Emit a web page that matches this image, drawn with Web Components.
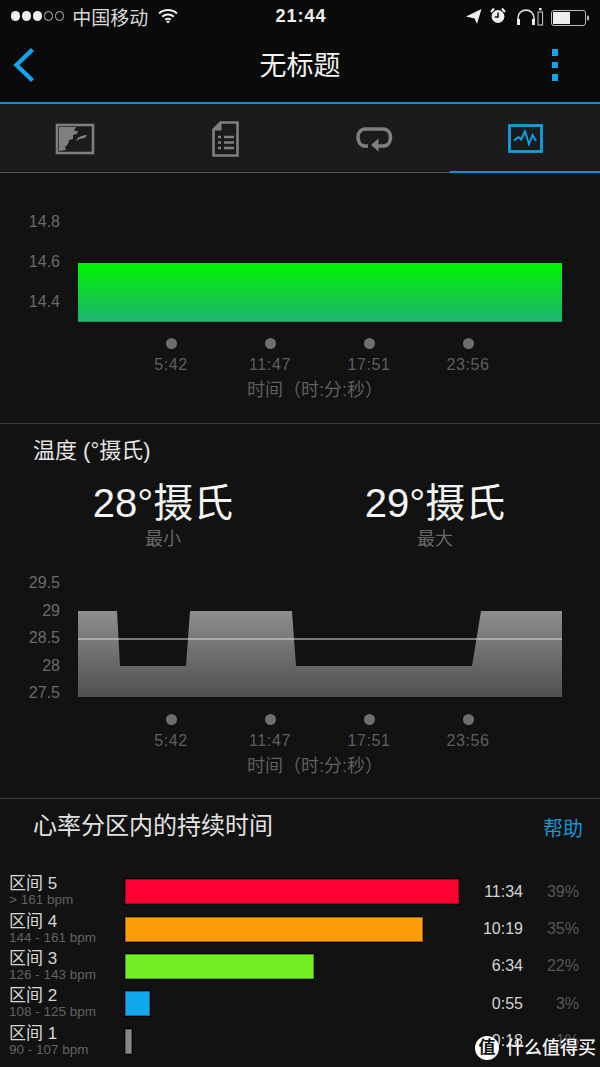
<!DOCTYPE html>
<html lang="zh">
<head>
<meta charset="utf-8">
<title>无标题</title>
<style>
html, body { margin: 0; height: 1067px; overflow: hidden; background: #121212; }
body { font-family: "Liberation Sans", "Noto Sans CJK SC", sans-serif; position: relative; }
</style>
</head>
<body>
<status-bar></status-bar>
<nav-bar heading="无标题"></nav-bar>
<tab-strip></tab-strip>

<chart-section style="--section-top: 29px; --axis-gap: 15.5px; --section-height: 251px">
  <trend-chart ticks="14.8,14.6,14.4" pitch="40" height="120">
    <svg viewBox="0 0 484 120" width="484" height="120">
      <defs>
        <linearGradient id="green" x1="0" y1="0" x2="0" y2="1">
          <stop offset="0" stop-color="#00f400"/>
          <stop offset="1" stop-color="#20b372"/>
        </linearGradient>
      </defs>
      <rect x="0" y="61" width="484" height="59" fill="url(#green)"/>
      <rect x="0" y="119" width="484" height="1" fill="#1a9a5e"/>
    </svg>
  </trend-chart>
  <time-axis></time-axis>
</chart-section>

<chart-section style="--section-top: 12px; --axis-gap: 16.5px; --section-height: 375px">
  <section-title>温度 (°摄氏)</section-title>
  <stat-pair low="28°摄氏" high="29°摄氏"></stat-pair>
  <trend-chart ticks="29.5,29,28.5,28,27.5" pitch="27.5" height="128">
    <svg viewBox="0 0 484 128" width="484" height="128">
      <defs>
        <linearGradient id="grey" gradientUnits="userSpaceOnUse" x1="0" y1="42" x2="0" y2="128">
          <stop offset="0" stop-color="#8e8e8e"/>
          <stop offset="1" stop-color="#505050"/>
        </linearGradient>
      </defs>
      <polygon fill="url(#grey)" points="0,42 39,42 42,97 108,97 112,42 214,42 218,97 394,97 403,42 484,42 484,128 0,128"/>
      <rect x="0" y="69.5" width="484" height="1" fill="#dcdcdc"/>
    </svg>
  </trend-chart>
  <time-axis></time-axis>
</chart-section>

<zone-list>
  <zone-row name="区间 5" range="&gt; 161 bpm" fill="#ff0033" edge="#a80024" width="100" time="11:34" share="39%"></zone-row>
  <zone-row name="区间 4" range="144 - 161 bpm" fill="#ff9c0a" edge="#a86a08" width="89.2" time="10:19" share="35%"></zone-row>
  <zone-row name="区间 3" range="126 - 143 bpm" fill="#72ee22" edge="#4b9c17" width="56.6" time="6:34" share="22%"></zone-row>
  <zone-row name="区间 2" range="108 - 125 bpm" fill="#10a9ef" edge="#0c70a0" width="7.5" time="0:55" share="3%"></zone-row>
  <zone-row name="区间 1" range="90 - 107 bpm" fill="#858585" edge="#5a5a5a" width="2.1" time="0:18" share="1%"></zone-row>
</zone-list>

<corner-mark></corner-mark>

<script>
const FONT = '"Liberation Sans", "Noto Sans CJK SC", sans-serif';

class StatusBar extends HTMLElement {
  connectedCallback() {
    const root = this.attachShadow({ mode: 'open' });
    root.innerHTML = `
<style>
:host { display: flex; align-items: center; height: 34px; padding: 0 9px 2px 11px; box-sizing: border-box; background: #0a0a0a; color: #e6e6e6; font-family: ${FONT}; position: relative; }
.dots { display: flex; gap: 1.6px; }
.dots i { width: 9.4px; height: 9.4px; border-radius: 50%; background: #eee; box-sizing: border-box; }
.dots i.off { background: none; border: 1px solid #bbb; }
.carrier { margin-left: 8px; font-size: 19px; letter-spacing: 0; color: #d8d8d8; }
.wifi { margin-left: 10px; }
.time { position: absolute; left: 0; right: 0; top: 5px; text-align: center; font-size: 18px; line-height: 22px; letter-spacing: 1px; font-weight: 700; color: #eee; padding-left: 2px; }
.right { margin-left: auto; display: flex; align-items: center; }
</style>
<div class="dots"><i></i><i></i><i></i><i class="off"></i><i class="off"></i></div>
<span class="carrier">中国移动</span>
<svg class="wifi" width="20" height="16" viewBox="0 0 20 16" fill="none" stroke="#eee" stroke-width="2">
  <path d="M1 5.4C6 .9 14 .9 19 5.4"/><path d="M4.2 8.7C7.4 5.9 12.6 5.9 15.8 8.7"/><path d="M7.3 11.8C8.9 10.5 11.1 10.5 12.7 11.8"/>
  <path d="M10 15.6 8 13.2C9.2 12.5 10.8 12.5 12 13.2Z" fill="#eee" stroke="none"/>
</svg>
<span class="time">21:44</span>
<div class="right">
  <svg width="125" height="24" viewBox="0 0 125 24" fill="none">
    <path d="M0 12.5 15.5 5 11 20 8.6 14.6Z" fill="#eee"/>
    <circle cx="32" cy="12.5" r="6.4" fill="#eee"/>
    <path d="M32 8.5V13H28.8" stroke="#111" stroke-width="1.5"/>
    <path d="M25 8 28 4.5M39 8 36 4.5" stroke="#eee" stroke-width="2"/>
    <path d="M52 19V14C52 3.5 68 3.5 68 14V19" stroke="#ddd" stroke-width="1.6"/>
    <rect x="51" y="15" width="3" height="6" fill="#eee"/><rect x="66" y="15" width="3" height="6" fill="#eee"/>
    <rect x="72" y="8" width="4.6" height="13" stroke="#ccc" stroke-width="1"/>
    <rect x="73" y="4" width="2.6" height="2.4" fill="#ddd"/>
    <rect x="85.5" y="6.5" width="34" height="15" rx="2.5" stroke="#bbb" stroke-width="1"/>
    <rect x="87" y="8" width="17" height="12" fill="#eee"/>
    <rect x="121" y="11.5" width="2" height="5" rx="1" fill="#bbb"/>
  </svg>
</div>`;
  }
}

class NavBar extends HTMLElement {
  connectedCallback() {
    const root = this.attachShadow({ mode: 'open' });
    root.innerHTML = `
<style>
:host { display: flex; align-items: center; justify-content: space-between; height: 70px; padding: 0 42px 6px 13px; box-sizing: border-box; background: #0a0a0a; border-bottom: 2px solid #0f94d6; font-family: ${FONT}; position: relative; }
h1 { position: absolute; left: 0; right: 0; top: 14px; margin: 0; text-align: center; font-size: 27px; line-height: 36px; font-weight: 400; color: #f2f2f2; }
.kebab { display: flex; flex-direction: column; gap: 6px; }
.kebab i { width: 6.5px; height: 6.5px; background: #10a5ec; }
</style>
<svg width="22" height="36" viewBox="0 0 22 36" fill="none"><path d="M19.5 2.5 3.5 18 19.5 33.5" stroke="#10a5ec" stroke-width="4.4"/></svg>
<h1>${this.getAttribute('heading')}</h1>
<div class="kebab"><i></i><i></i><i></i></div>`;
  }
}

class TabStrip extends HTMLElement {
  connectedCallback() {
    const root = this.attachShadow({ mode: 'open' });
    root.innerHTML = `
<style>
:host { display: grid; grid-template-columns: repeat(4, 150px); height: 69px; background: #1b1b1b; }
div { display: flex; align-items: center; justify-content: center; box-sizing: border-box; border-bottom: 1px solid #555; padding-top: 1px; }
div.on { border-bottom: 2px solid #0f94d6; }
</style>
<div>
  <svg width="40" height="32" viewBox="0 0 40 32" style="margin-right:0">
    <rect x="2" y="2" width="36" height="28" fill="#1b1b1b" stroke="#7f7f7f" stroke-width="2.6"/>
    <path d="M4 4H21L19 8 23 8 22 11 18 12 18 16 14 17 13 21 10 24 11 27 4 28Z" fill="#7f7f7f"/>
    <path d="M21 18C22 14 28 12 32 12L30 15C27 15 24 16 21 18Z" fill="#7f7f7f"/>
  </svg>
</div>
<div>
  <svg width="27" height="36" viewBox="0 0 27 36" fill="none">
    <path d="M8.5 1.5H25.5V34.5H1.5V8.5Z" fill="#1b1b1b" stroke="#7f7f7f" stroke-width="2.6"/>
    <path d="M9.5 1.5V9.5H1.5Z" fill="#7f7f7f"/>
    <path d="M2 8 9 2V9Z" fill="#7f7f7f"/>
    <path d="M6 16H9M12 16H22M6 21.5H9M12 21.5H22M6 27H9M12 27H22" stroke="#7f7f7f" stroke-width="2.6"/>
  </svg>
</div>
<div>
  <svg width="38" height="26" viewBox="0 0 38 26" fill="none">
    <path d="M12 20H9.5C-.5 20-.5 3 9.5 3H27C37 3 37 20 27 20H21" stroke="#7f7f7f" stroke-width="3.6"/>
    <path d="M22.5 12.5V25.5L15 19Z" fill="#7f7f7f"/>
  </svg>
</div>
<div class="on">
  <svg width="35" height="29" viewBox="0 0 35 29" fill="none">
    <rect x="1.5" y="1.5" width="32" height="26" stroke="#109fe0" stroke-width="2.8"/>
    <path d="M6 16.5 10.5 13 13 15.5 17 7.5 21 20 24.5 11 28 17" stroke="#109fe0" stroke-width="2"/>
  </svg>
</div>`;
  }
}

class ChartSection extends HTMLElement {
  constructor() {
    super();
    const root = this.attachShadow({ mode: 'open' });
    root.innerHTML = `
<style>
:host { display: block; box-sizing: border-box; height: var(--section-height); padding-top: var(--section-top); border-bottom: 1px solid #3c3c3c; background: #121212; }
</style>
<slot></slot>`;
  }
}

class SectionTitle extends HTMLElement {
  constructor() {
    super();
    const root = this.attachShadow({ mode: 'open' });
    root.innerHTML = `
<style>
:host { display: block; padding-left: 33px; font-size: 22px; line-height: 30px; color: #e4e4e4; }
</style>
<slot></slot>`;
  }
}

class StatPair extends HTMLElement {
  connectedCallback() {
    const root = this.attachShadow({ mode: 'open' });
    root.innerHTML = `
<style>
:host { display: grid; grid-template-columns: 272px 272px; padding-left: 27px; height: 103px; box-sizing: border-box; padding-top: 14px; text-align: center; }
b { display: block; font-weight: 400; font-size: 40px; line-height: 46px; color: #f4f4f4; }
span { display: block; font-size: 18px; line-height: 24px; color: #666; margin-top: 1px; }
</style>
<div><b>${this.getAttribute('low')}</b><span>最小</span></div>
<div><b>${this.getAttribute('high')}</b><span>最大</span></div>`;
  }
}

class TrendChart extends HTMLElement {
  connectedCallback() {
    const root = this.attachShadow({ mode: 'open' });
    const pitch = this.getAttribute('pitch');
    const ticks = this.getAttribute('ticks').split(',')
      .map((t) => `<span style="height:${pitch}px;line-height:${pitch}px">${t}</span>`).join('');
    root.innerHTML = `
<style>
:host { display: grid; grid-template-columns: 60px 484px; column-gap: 18px; height: ${this.getAttribute('height')}px; }
.ticks { display: flex; flex-direction: column; text-align: right; font-size: 16px; color: #6a6a6a; }
::slotted(svg) { display: block; }
</style>
<div class="ticks">${ticks}</div>
<slot></slot>`;
  }
}

class TimeAxis extends HTMLElement {
  connectedCallback() {
    const root = this.attachShadow({ mode: 'open' });
    const marks = ['5:42', '11:47', '17:51', '23:56']
      .map((m) => `<div class="mark"><i></i><span>${m}</span></div>`).join('');
    root.innerHTML = `
<style>
:host { display: block; margin-top: var(--axis-gap); color: #5f5f5f; }
.marks { display: grid; grid-template-columns: repeat(4, 99px); padding-left: 121.5px; }
.mark { display: flex; flex-direction: column; align-items: center; }
i { width: 11px; height: 11px; border-radius: 50%; background: #6e6e6e; }
span { font-size: 16px; line-height: 22px; letter-spacing: .6px; margin-top: 5px; }
p { margin: 2px 0 0 30px; text-align: center; font-size: 18px; line-height: 24px; }
</style>
<div class="marks">${marks}</div>
<p>时间（时:分:秒）</p>`;
  }
}

class ZoneList extends HTMLElement {
  constructor() {
    super();
    const root = this.attachShadow({ mode: 'open' });
    root.innerHTML = `
<style>
:host { display: block; }
header { display: flex; justify-content: space-between; height: 74px; padding: 10px 17px 0 33px; box-sizing: border-box; }
h2 { margin: 0; font-size: 24px; line-height: 34px; font-weight: 400; color: #e2e2e2; }
a { font-size: 20px; line-height: 40px; color: #1795d4; }
</style>
<header><h2>心率分区内的持续时间</h2><a>帮助</a></header>
<slot></slot>`;
  }
}

class ZoneRow extends HTMLElement {
  connectedCallback() {
    const root = this.attachShadow({ mode: 'open' });
    const attr = (n) => this.getAttribute(n);
    root.innerHTML = `
<style>
:host { display: grid; grid-template-columns: 116px 334px 64px 56px; align-items: center; height: 37.4px; padding-left: 9px; }
.name { font-size: 17px; line-height: 18px; color: #d8d8d8; margin-top: -1px; }
.range { font-size: 13.5px; line-height: 14px; color: #626262; }
.track { height: 25px; }
.bar { height: 100%; box-sizing: border-box; border: 1px solid ${attr('edge')}; outline: 1px solid #000; background: ${attr('fill')}; width: ${attr('width')}%; }
.time, .share { text-align: right; font-size: 16px; }
.time { color: #d4d4d4; }
.share { color: #565656; }
</style>
<div><div class="name">${attr('name')}</div><div class="range">${attr('range')}</div></div>
<div class="track"><div class="bar"></div></div>
<div class="time">${attr('time')}</div>
<div class="share">${attr('share')}</div>`;
  }
}

// site stamp sitting over the last table row
class CornerMark extends HTMLElement {
  connectedCallback() {
    const root = this.attachShadow({ mode: 'open' });
    root.innerHTML = `
<style>
:host { position: absolute; left: 475px; top: 1036px; display: flex; align-items: center; gap: 7px; }
i { width: 24px; height: 24px; border-radius: 50%; background: #fff; color: #111; font-style: normal; font-size: 17px; line-height: 24px; text-align: center; font-weight: 700; }
span { font-size: 18px; line-height: 24px; color: #f4f4f4; white-space: nowrap; font-weight: 500; }
</style>
<i>值</i><span>什么值得买</span>`;
  }
}

customElements.define('status-bar', StatusBar);
customElements.define('nav-bar', NavBar);
customElements.define('tab-strip', TabStrip);
customElements.define('chart-section', ChartSection);
customElements.define('section-title', SectionTitle);
customElements.define('stat-pair', StatPair);
customElements.define('trend-chart', TrendChart);
customElements.define('time-axis', TimeAxis);
customElements.define('zone-list', ZoneList);
customElements.define('zone-row', ZoneRow);
customElements.define('corner-mark', CornerMark);
</script>
</body>
</html>
